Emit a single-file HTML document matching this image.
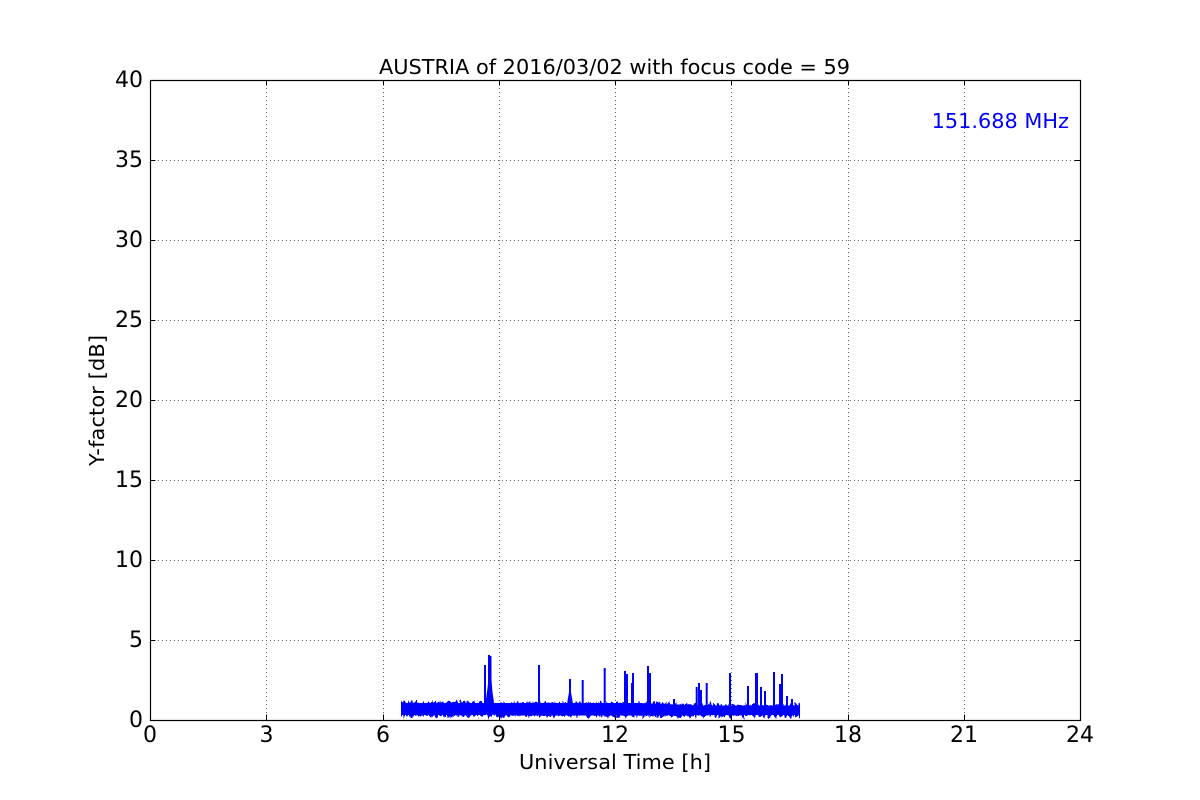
<!DOCTYPE html>
<html><head><meta charset="utf-8"><style>
html,body{margin:0;padding:0;background:#fff}
svg{display:block}
text{font-family:"DejaVu Sans",sans-serif;fill:#000}
.t{font-size:22px}
.l{font-size:20.85px}
</style></head><body>
<svg width="1200" height="800" viewBox="0 0 1200 800">
<defs>
<filter id="n" x="380" y="640" width="440" height="100" filterUnits="userSpaceOnUse" color-interpolation-filters="sRGB">
<feTurbulence type="fractalNoise" baseFrequency="0.5 0.14" numOctaves="2" seed="7" result="r"/>
<feDisplacementMap in="SourceGraphic" in2="r" scale="10" xChannelSelector="R" yChannelSelector="G"/>
</filter>
<clipPath id="c"><rect x="401" y="640" width="399" height="100"/></clipPath>
</defs>
<rect width="1200" height="800" fill="#fff"/>
<g stroke="#000" stroke-width="1" stroke-dasharray="1 3" fill="none" opacity=".6">
<path d="M266.500 80V720M383.500 80V720M499.500 80V720M615.500 80V720M731.500 80V720M848.500 80V720M964.500 80V720"/>
<path d="M150 160.500H1080M150 240.500H1080M150 320.500H1080M150 400.500H1080M150 480.500H1080M150 560.500H1080M150 640.500H1080"/>
</g>
<g clip-path="url(#c)">
<path filter="url(#n)" fill="#0000ff" d="M396 702H486L494 703H640L700 705H805V716H700L640 716H396Z"/>
</g>
<path fill="#0000ff" d="M401 703H640L700 705.500H800V715H700L640 715.500H497L494 713L491.500 703L490 701L488.500 706L486 713L482 715H401Z"/>
<path fill="#0000ff" d="M485 706L487 692L488.500 680H491.500L492.500 692L494.500 706Z"/>
<path fill="#0000ff" d="M567 704L569 692H571L573 704Z"/>
<g stroke="#0000ff" stroke-width="2" fill="none">
<path d="M485 704V665M489 704V655M490.500 704V656M539 704V665M570 704V679M582.700 704V680M604.700 704V668M625 704V671M627 704V674M632 704V683M633 704V673M648 704V666M650 704V673M674 706V699M696.700 706V687M699 706V683M701 706V690M706.700 706V683M730 706V673M748 706V686M756 706V673M757 706V673M761 706V687M765 706V691M774 706V672M780 706V684M782 706V674M787 706V696M792 706V699"/>
</g>
<g stroke="#000" stroke-width="1" fill="none">
<path d="M266.500 720v-5.500M383.500 720v-5.500M499.500 720v-5.500M615.500 720v-5.500M731.500 720v-5.500M848.500 720v-5.500M964.500 720v-5.500M266.500 80v5.500M383.500 80v5.500M499.500 80v5.500M615.500 80v5.500M731.500 80v5.500M848.500 80v5.500M964.500 80v5.500"/>
<path d="M150 160.500h5.500M150 240.500h5.500M150 320.500h5.500M150 400.500h5.500M150 480.500h5.500M150 560.500h5.500M150 640.500h5.500M1080 160.500h-5.500M1080 240.500h-5.500M1080 320.500h-5.500M1080 400.500h-5.500M1080 480.500h-5.500M1080 560.500h-5.500M1080 640.500h-5.500"/>
</g>
<rect x="150.500" y="80.500" width="930" height="640" fill="none" stroke="#000" stroke-width="1.200"/>
<g text-anchor="end">
<text class="t" x="143" y="87">40</text>
<text class="t" x="143" y="167">35</text>
<text class="t" x="143" y="247">30</text>
<text class="t" x="143" y="327">25</text>
<text class="t" x="143" y="407">20</text>
<text class="t" x="143" y="487">15</text>
<text class="t" x="143" y="567">10</text>
<text class="t" x="143" y="647">5</text>
<text class="t" x="143" y="727">0</text>
</g>
<g text-anchor="middle">
<text class="t" x="150" y="742">0</text>
<text class="t" x="266.500" y="742">3</text>
<text class="t" x="383" y="742">6</text>
<text class="t" x="499" y="742">9</text>
<text class="t" x="615" y="742">12</text>
<text class="t" x="731.500" y="742">15</text>
<text class="t" x="848" y="742">18</text>
<text class="t" x="964" y="742">21</text>
<text class="t" x="1080" y="742">24</text>
<text class="l" x="614.500" y="74" textLength="471">AUSTRIA of 2016/03/02 with focus code = 59</text>
<text class="l" x="615" y="769" textLength="192">Universal Time [h]</text>
<text class="l" transform="translate(104 400.500) rotate(-90)" textLength="131">Y-factor [dB]</text>
</g>
<text class="l" x="1069" y="128" text-anchor="end" style="fill:#0000ff">151.688 MHz</text>
</svg>
</body></html>
